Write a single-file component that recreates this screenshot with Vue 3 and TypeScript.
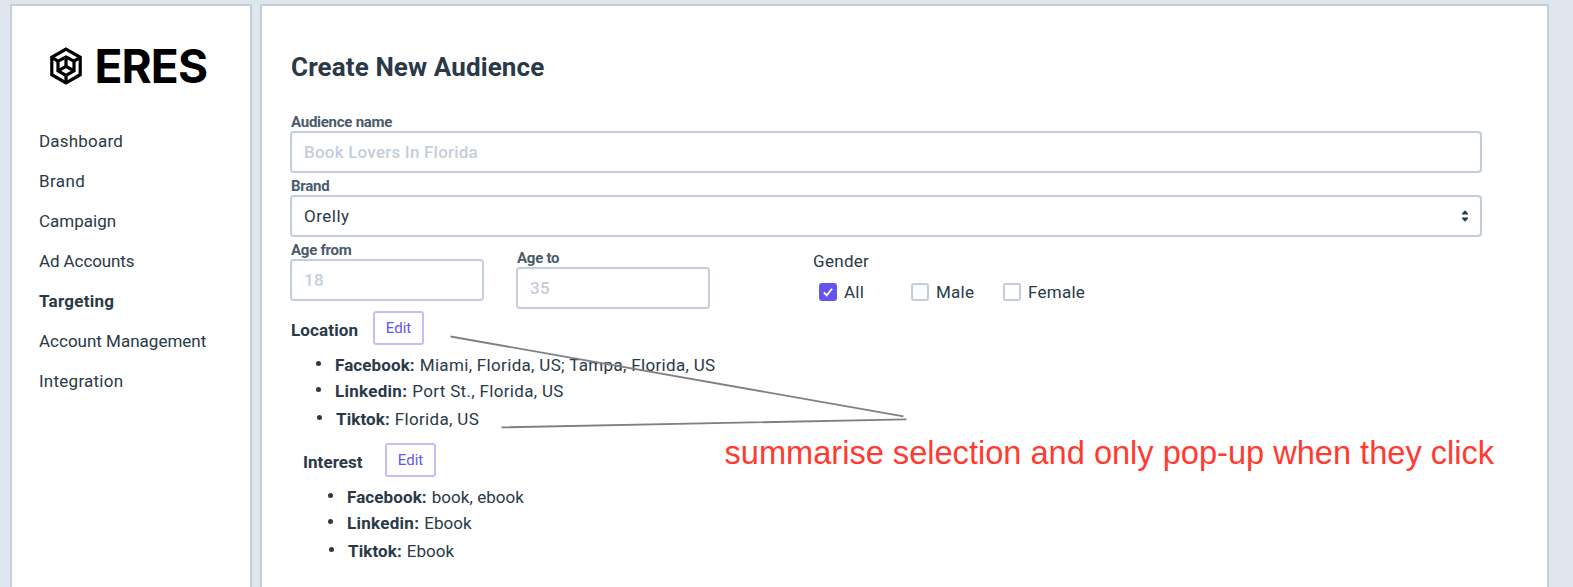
<script setup lang="ts">
interface NavItem { label: string; key: string; active?: boolean }
interface Entry { network: string; value: string; key: string }
interface Group { title: string; key: string; entries: Entry[] }

const nav: NavItem[] = [
  { label: 'Dashboard', key: 'dashboard' },
  { label: 'Brand', key: 'brand' },
  { label: 'Campaign', key: 'campaign' },
  { label: 'Ad Accounts', key: 'accounts' },
  { label: 'Targeting', key: 'targeting', active: true },
  { label: 'Account Management', key: 'management' },
  { label: 'Integration', key: 'integration' },
]

const genders = [
  { label: 'All', checked: true },
  { label: 'Male', checked: false },
  { label: 'Female', checked: false },
]

const groups: Group[] = [
  {
    title: 'Location',
    key: 'location',
    entries: [
      { network: 'Facebook:', value: 'Miami, Florida, US; Tampa, Florida, US', key: 'facebook' },
      { network: 'Linkedin:', value: 'Port St., Florida, US', key: 'linkedin' },
      { network: 'Tiktok:', value: 'Florida, US', key: 'tiktok' },
    ],
  },
  {
    title: 'Interest',
    key: 'interest',
    entries: [
      { network: 'Facebook:', value: 'book, ebook', key: 'facebook' },
      { network: 'Linkedin:', value: 'Ebook', key: 'linkedin' },
      { network: 'Tiktok:', value: 'Ebook', key: 'tiktok' },
    ],
  },
]
</script>

<template>
  <div class="page">
    <aside class="sidebar">
      <div class="logo">
        <svg class="logo-mark" width="34" height="38" viewBox="0 0 34 38" fill="none" stroke="#000" stroke-width="3.2">
          <path d="M17 2.2 31.2 10.3V27.7L17 35.8 2.8 27.7V10.3Z" />
          <path d="M17 10 25 14.2V23.8L17 28.4 9 23.8V14.2Z" />
          <path d="M17 10V19.4M9 23.8 17 19.4 25 23.8M2.8 10.3 9 14.2M31.2 10.3 25 14.2M17 28.4V35.8" />
        </svg>
        <span class="logo-text">ERES</span>
      </div>
      <nav class="nav">
        <a v-for="n in nav" :key="n.key" :class="['nav-item', n.key, { active: n.active }]">{{ n.label }}</a>
      </nav>
    </aside>

    <main class="panel">
      <h1 class="title">Create New Audience</h1>
      <label class="label">Audience name</label>
      <div class="field placeholder">Book Lovers In Florida</div>
      <label class="label">Brand</label>
      <div class="field select">
        <span>Orelly</span>
        <svg width="6" height="12" viewBox="0 0 6 12" fill="#2a3947">
          <path d="M2.4 .8H3.6L6 3.4V4.4H0V3.4ZM2.4 11.2H3.6L6 8.6V7.6H0V8.6Z" />
        </svg>
      </div>

      <div class="row">
        <div class="age">
          <label class="label">Age from</label>
          <div class="field placeholder">18</div>
        </div>
        <div class="age to">
          <label class="label">Age to</label>
          <div class="field placeholder">35</div>
        </div>
        <div class="gender">
          <div class="gender-title">Gender</div>
          <div class="options">
            <div v-for="g in genders" :key="g.label" class="option">
              <span :class="['box', { checked: g.checked }]">
                <svg v-if="g.checked" width="18" height="18" viewBox="0 0 18 18" fill="none" stroke="#fff" stroke-width="1.8">
                  <path d="M4.9 9.5 7.7 12.3 13 5.8" />
                </svg>
              </span>
              <span>{{ g.label }}</span>
            </div>
          </div>
        </div>
      </div>

      <section v-for="g in groups" :key="g.key" :class="['group', g.key]">
        <div class="group-head">
          <h2>{{ g.title }}</h2>
          <button type="button">Edit</button>
        </div>
        <ul>
          <li v-for="e in g.entries" :key="e.key" :class="e.key">
            <b>{{ e.network }}</b><span>{{ e.value }}</span>
          </li>
        </ul>
      </section>
    </main>

    <svg class="callout-lines" width="1573" height="587" fill="none" stroke="#808080" stroke-width="1.8">
      <path d="M450.5 336.5 903.5 416.3M501.5 427.4 906.5 419.4" />
    </svg>
    <div class="callout">summarise selection and only pop-up when they click</div>
  </div>
</template>

<style>
body { margin: 0; overflow: hidden; }
</style>

<style scoped>
* { box-sizing: border-box; }
.page {
  position: relative;
  width: 1573px;
  height: 587px;
  padding: 4px 0 0 10px;
  display: flex;
  gap: 8px;
  overflow: hidden;
  background: #dfe6ee;
  color: #2a3947;
  font: 400 17px Roboto, "Liberation Sans", sans-serif;
  white-space: nowrap;
}
.sidebar, .panel {
  height: 600px;
  background: #fff;
  border: 2px solid #c3ceda;
}
.sidebar { width: 242px; padding: 40px 0 0 27px; }
.panel { width: 1289px; padding: 43px 0 0 28px; }

.logo { display: flex; align-items: center; height: 40px; margin: 0 0 35px 10px; }
.logo-mark { display: block; }
.logo-text {
  margin-left: 11.5px;
  color: #000;
  font: 700 46px/40px Inter, sans-serif;
  letter-spacing: -0.9px;
}
.nav { display: flex; flex-direction: column; }
.nav-item { line-height: 40px; }
.nav-item.active { font-weight: 700; letter-spacing: 0.27px; }
.nav-item.dashboard { letter-spacing: 0.2px; }
.nav-item.brand { letter-spacing: 0.4px; }
.nav-item.accounts { letter-spacing: -0.1px; }
.nav-item.management { letter-spacing: 0; }
.nav-item.integration { letter-spacing: 0.25px; }

.title { margin: 0 0 26px; padding-left: 1px; font-size: 26px; line-height: 36px; font-weight: 700; letter-spacing: 0.12px; }
.label {
  display: block;
  height: 22px;
  padding-left: 1px;
  color: #4a5b6c;
  font-size: 15px;
  line-height: 27px;
  font-weight: 700;
  letter-spacing: -0.26px;
}
.title + .label { height: 20px; line-height: 23px; }
.field {
  width: 1192px;
  height: 42px;
  padding: 0 12px;
  border: 2px solid #c3ceda;
  border-radius: 4px;
  line-height: 38px;
}
.field.placeholder { color: #c3ceda; font-weight: 500; letter-spacing: 0.22px; }
.select { display: flex; align-items: center; justify-content: space-between; letter-spacing: 0.5px; }

.row { display: flex; height: 74px; }
.age { width: 194px; }
.age .field { width: 194px; }
.age.to { margin: 8px 0 0 32px; }
.gender { margin: 12px 0 0 103px; }
.gender-title { line-height: 24px; letter-spacing: 0.3px; }
.options { display: flex; margin-top: 7px; padding-left: 6px; }
.option { display: flex; align-items: center; width: 92px; height: 24px; gap: 7px; letter-spacing: 0.25px; }
.box { width: 18px; height: 18px; border: 2px solid #c3ceda; border-radius: 3px; }
.box.checked { border: 0; background: #6355f0; }
.box svg { display: block; }

.group { height: 132px; }
.group.interest { margin-left: 12px; }
.group-head { display: flex; height: 34px; }
.group-head h2 { width: 83px; margin: 2px 0 0; padding-left: 1px; font-size: 17px; line-height: 34px; font-weight: 700; letter-spacing: 0.14px; }
.group-head button {
  width: 51px;
  height: 34px;
  padding: 0;
  border: 2px solid #c4bffb;
  border-radius: 3px;
  background: #fff;
  color: #6355f0;
  font: 400 15px/30px Roboto, sans-serif;
}
.interest h2 { letter-spacing: 0.05px; }
ul { margin: 0; padding: 7px 0 0 45px; list-style: none; }
li { display: flex; align-items: center; height: 26px; }
li::before { content: ""; width: 5px; height: 5px; margin: -3px 0 0 -19px; border-radius: 50%; background: #2a3947; }
li b { margin-left: 14px; letter-spacing: 0.1px; }
li span { margin-left: 5px; letter-spacing: 0.33px; }
li.linkedin b { letter-spacing: 0.28px; }
li.tiktok { margin: 2px 0 0 1px; }
.interest li span { letter-spacing: 0.05px; }

.callout-lines { position: absolute; left: 0; top: 0; }
.callout {
  position: absolute;
  left: 724.5px;
  top: 433px;
  color: #ff3b30;
  font: 400 32.6px/40px "Liberation Sans", Arial, sans-serif;
}
</style>
